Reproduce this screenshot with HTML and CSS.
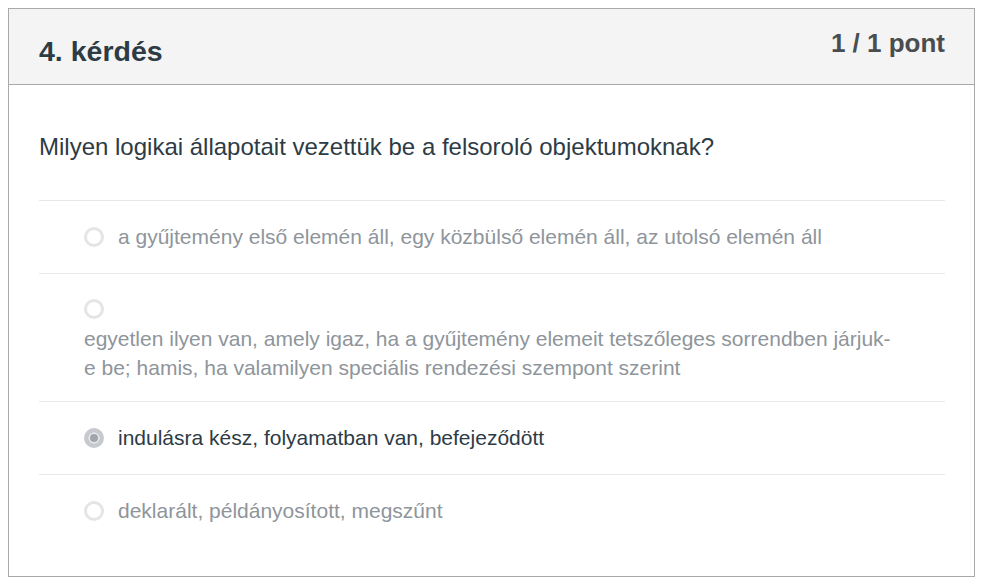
FILE: index.html
```html
<!DOCTYPE html>
<html lang="hu">
<head>
<meta charset="utf-8">
<link rel="stylesheet" href="styles.css">
</head>
<body>
<div class="card">
  <div class="card-header">
    <h2 class="title">4. kérdés</h2>
    <div class="points">1 / 1 pont</div>
  </div>
  <div class="card-body">
    <p class="question">Milyen logikai állapotait vezettük be a felsoroló objektumoknak?</p>
    <div class="answers">
      <div class="answer">
        <span class="radio"></span>
        <span class="label">a gyűjtemény első elemén áll, egy közbülső elemén áll, az utolsó elemén áll</span>
      </div>
      <div class="answer answer-block">
        <span class="radio"></span>
        <span class="label">egyetlen ilyen van, amely igaz, ha a gyűjtemény elemeit tetszőleges sorrendben járjuk-e be; hamis, ha valamilyen speciális rendezési szempont szerint</span>
      </div>
      <div class="answer selected">
        <span class="radio"></span>
        <span class="label">indulásra kész, folyamatban van, befejeződött</span>
      </div>
      <div class="answer">
        <span class="radio"></span>
        <span class="label">deklarált, példányosított, megszűnt</span>
      </div>
    </div>
  </div>
</div>
</body>
</html>
```
FILE: styles.css
```css
html, body {
  margin: 0;
  padding: 0;
  background: #ffffff;
}
body {
  padding: 8px;
  font-family: "Liberation Sans", Arial, sans-serif;
  color: #2d3b45;
}
.card {
  width: 967px;
  box-sizing: border-box;
  border: 1px solid #a9a9a9;
  background: #fff;
}
.card-header {
  background: #f4f4f4;
  border-bottom: 1px solid #a9a9a9;
  height: 75px;
  display: flex;
  justify-content: space-between;
  align-items: flex-start;
  padding: 0 29px 0 30px;
}
.title {
  margin: 0;
  margin-top: 26px;
  font-size: 28.5px;
  font-weight: bold;
  line-height: 32px;
  color: #2d3b45;
}
.points {
  margin-top: 19px;
  font-size: 26px;
  font-weight: bold;
  line-height: 30px;
  color: #4a4d50;
}
.card-body {
  padding: 40px 29px 29px 30px;
}
.question {
  margin: 0 0 31px 0;
  font-size: 24px;
  line-height: 44px;
  color: #2d3b45;
}
.answer {
  border-top: 1px solid #e8e8e8;
  padding: 22px 50px 22px 45px;
  display: flex;
  align-items: center;
  font-size: 21px;
  line-height: 28px;
  color: #8e959b;
}
.answer-block {
  display: block;
  padding-bottom: 19px;
}
.answer-block .radio {
  display: block;
  margin: 3px 0 5px 0;
}
.answer-block .label {
  display: block;
  line-height: 29px;
}
.radio {
  width: 20px;
  height: 20px;
  box-sizing: border-box;
  border: 3px solid #e3e5e7;
  border-radius: 50%;
  margin-right: 14px;
  flex: none;
  background: #fff;
}
.selected {
  color: #2d3b45;
}
.selected .radio {
  border: 4px solid #c6c9ce;
  background: #a3a5ad;
  box-shadow: inset 0 0 0 2px #e6e7ea;
}
```
